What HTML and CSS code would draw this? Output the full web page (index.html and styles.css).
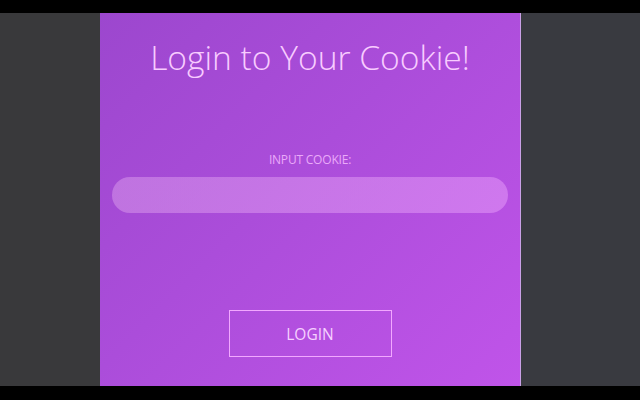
FILE: index.html
```html
<!DOCTYPE html>
<html>
<head>
<meta charset="utf-8">
<link rel="stylesheet" href="styles.css">
</head>
<body>
<div class="screen">
  <div class="bar-top"></div>
  <div class="main">
    <div class="side side-left"></div>
    <div class="card">
      <h1 class="title">Login to Your Cookie!</h1>
      <div class="field">
        <label class="label">INPUT COOKIE:</label>
        <div class="input"></div>
      </div>
      <button class="btn">LOGIN</button>
    </div>
    <div class="side side-right"></div>
  </div>
  <div class="bar-bottom"></div>
</div>
</body>
</html>
```
FILE: styles.css
```css
html, body { margin: 0; padding: 0; background: #000; }
.screen { width: 640px; height: 400px; display: flex; flex-direction: column; font-family: "Open Sans", "Noto Sans", sans-serif; }
.bar-top { height: 13px; background: #000; }
.bar-bottom { height: 14px; background: #000; }
.main { flex: 1; display: flex; }
.side { flex: none; }
.side-left { width: 100px; background: #39393b; }
.side-right { flex: 1; background: #393a40; }
.card {
  width: 420px;
  border-right: 1px solid #c9a0e6;
  background: linear-gradient(135deg, #9c47ce 0%, #ab4dda 45%, #c054e9 100%);
  display: flex; flex-direction: column; align-items: center;
}
.title {
  margin: 24px 0 0;
  font-size: 33.6px; font-weight: 300; line-height: 40px;
  color: #f8ccff;
  letter-spacing: 0;
}
.field { margin-top: 76px; width: 396px; display: flex; flex-direction: column; align-items: center; }
.label { font-size: 12px; line-height: 14px; color: #eaaaf9; font-weight: 400; letter-spacing: -0.2px; }
.input {
  margin-top: 10px; width: 396px; height: 36px; border-radius: 18px;
  background: linear-gradient(90deg, rgba(225,165,238,0.45), rgba(232,158,250,0.5));
}
.btn {
  margin-top: 97px; width: 163px; height: 47px;
  background: transparent; border: 1px solid #f2a8ff;
  color: #f6d0ff; font-family: inherit; font-size: 15.5px; line-height: 20px;
  padding: 0;
}
```
